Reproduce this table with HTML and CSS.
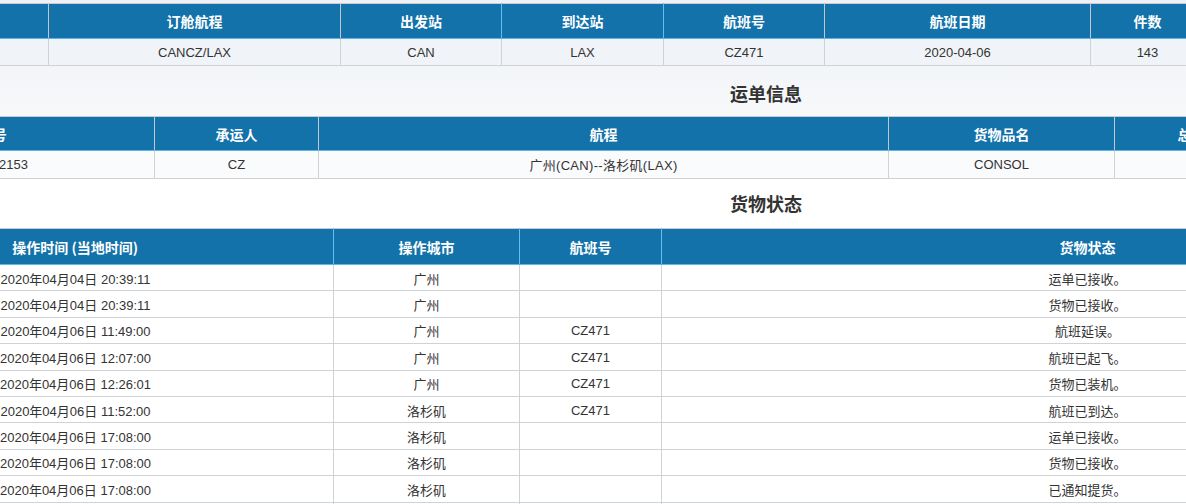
FILE: index.html
```html
<!DOCTYPE html>
<html lang="zh-CN">
<head>
<meta charset="utf-8">
<title>货物追踪</title>
<link rel="stylesheet" href="styles.css">
</head>
<body>
<div class="page">
  <div class="top-band"></div>
  <table class="grid grid-booking">
    <colgroup>
      <col class="b1"><col class="b2"><col class="b3"><col class="b4"><col class="b5"><col class="b6"><col class="b7"><col class="b8"><col class="b9">
    </colgroup>
    <thead>
      <tr>
        <th class="sep-gray">运单号</th>
        <th class="sep-gray">订舱航程</th>
        <th class="sep-blue">出发站</th>
        <th class="sep-blue">到达站</th>
        <th class="sep-gray">航班号</th>
        <th class="sep-gray">航班日期</th>
        <th class="sep-gray">件数</th>
        <th class="sep-gray">重量</th>
        <th>体积</th>
      </tr>
    </thead>
    <tbody>
      <tr>
        <td>784-66002153</td>
        <td>CANCZ/LAX</td>
        <td>CAN</td>
        <td>LAX</td>
        <td>CZ471</td>
        <td>2020-04-06</td>
        <td>143</td>
        <td></td>
        <td></td>
      </tr>
    </tbody>
  </table>

  <h2 class="section-title title-waybill">运单信息</h2>

  <table class="grid grid-waybill">
    <colgroup>
      <col class="w1"><col class="w2"><col class="w3"><col class="w4"><col class="w5"><col class="w6"><col class="w7">
    </colgroup>
    <thead>
      <tr>
        <th class="sep-gray">运单号</th>
        <th class="sep-gray">承运人</th>
        <th class="sep-gray">航程</th>
        <th class="sep-gray">货物品名</th>
        <th class="sep-gray">总件数</th>
        <th class="sep-gray">总重量</th>
        <th>总体积</th>
      </tr>
    </thead>
    <tbody>
      <tr>
        <td>784-66002153</td>
        <td>CZ</td>
        <td class="route">广州(CAN)--洛杉矶(LAX)</td>
        <td>CONSOL</td>
        <td></td>
        <td></td>
        <td></td>
      </tr>
    </tbody>
  </table>

  <h2 class="section-title title-status">货物状态</h2>

  <table class="grid grid-status">
    <colgroup>
      <col class="s1"><col class="s2"><col class="s3"><col class="s4"><col class="s5">
    </colgroup>
    <thead>
      <tr>
        <th class="sep-blue">操作时间 (当地时间)</th>
        <th class="sep-blue">操作城市</th>
        <th class="sep-blue">航班号</th>
        <th class="sep-blue">货物状态</th>
        <th>件数</th>
      </tr>
    </thead>
    <tbody>
      <tr><td>2020年04月04日 20:39:11</td><td>广州</td><td></td><td>运单已接收。</td><td></td></tr>
      <tr><td>2020年04月04日 20:39:11</td><td>广州</td><td></td><td>货物已接收。</td><td></td></tr>
      <tr><td>2020年04月06日 11:49:00</td><td>广州</td><td>CZ471</td><td>航班延误。</td><td></td></tr>
      <tr><td>2020年04月06日 12:07:00</td><td>广州</td><td>CZ471</td><td>航班已起飞。</td><td></td></tr>
      <tr><td>2020年04月06日 12:26:01</td><td>广州</td><td>CZ471</td><td>货物已装机。</td><td></td></tr>
      <tr><td>2020年04月06日 11:52:00</td><td>洛杉矶</td><td>CZ471</td><td>航班已到达。</td><td></td></tr>
      <tr><td>2020年04月06日 17:08:00</td><td>洛杉矶</td><td></td><td>运单已接收。</td><td></td></tr>
      <tr><td>2020年04月06日 17:08:00</td><td>洛杉矶</td><td></td><td>货物已接收。</td><td></td></tr>
      <tr><td>2020年04月06日 17:08:00</td><td>洛杉矶</td><td></td><td>已通知提货。</td><td></td></tr>
      <tr><td>2020年04月06日 17:08:00</td><td>洛杉矶</td><td></td><td>货物已提取。</td><td></td></tr>
    </tbody>
  </table>
</div>
</body>
</html>
```

FILE: styles.css
```css
html, body {
  margin: 0;
  padding: 0;
  background: #ffffff;
  overflow: hidden;
}

body {
  font-family: "Liberation Sans", "Noto Sans CJK SC", sans-serif;
  font-size: 13px;
  color: #333333;
}

.page {
  width: 1898px;
  margin-left: -183px;
  background: linear-gradient(180deg, #eef1f5 0px, #f6f8fa 110px, #ffffff 180px, #ffffff 100%);
}

.top-band {
  height: 3px;
}

.grid {
  width: 1898px;
  border-collapse: collapse;
  table-layout: fixed;
}

.grid th {
  background: #1272a9;
  color: #ffffff;
  font-family: "Noto Sans CJK SC", "Liberation Sans", sans-serif;
  font-weight: bold;
  font-size: 14px;
  text-align: center;
  padding: 0;
  border-top: 1px solid #c9ccd0;
  border-bottom: 1px solid #5cb6ea;
  white-space: nowrap;
  overflow: hidden;
}

.grid th.sep-gray {
  border-right: 1px solid #c2c6cc;
}

.grid th.sep-blue {
  border-right: 1px solid #62bdf0;
}

.grid td {
  text-align: center;
  padding: 0;
  border: 1px solid #cfd2d6;
  border-top: none;
  white-space: nowrap;
  overflow: hidden;
}

/* booking table */
.grid-booking th {
  height: 34px;
}

.grid-booking td {
  height: 26px;
  background: #f0f3f7;
}

.b1 { width: 231px; }
.b2 { width: 292px; }
.b3 { width: 161px; }
.b4 { width: 162px; }
.b5 { width: 161px; }
.b6 { width: 266px; }
.b7 { width: 114px; }
.b8 { width: 255px; }
.b9 { width: 256px; }

/* section titles */
.section-title {
  margin: 0;
  text-align: center;
  font-family: "Noto Sans CJK SC", "Liberation Sans", sans-serif;
  font-size: 18px;
  font-weight: bold;
  color: #333333;
  line-height: 28px;
}

.title-waybill {
  padding: 13px 0 9px;
}

.title-status {
  padding: 10px 0 11px;
}

/* waybill table */
.grid-waybill th {
  height: 33px;
}

.grid-waybill td {
  height: 27px;
  background: #fafbfd;
}

.grid-waybill td.route {
  letter-spacing: 0.3px;
}

.w1 { width: 337px; }
.w2 { width: 164px; }
.w3 { width: 570px; }
.w4 { width: 226px; }
.w5 { width: 168px; }
.w6 { width: 216px; }
.w7 { width: 217px; }

/* status table */
.grid-status th {
  height: 35px;
}

.grid-status td {
  height: 24.4px;
  padding-top: 1px;
  background: #ffffff;
}

.s1 { width: 516px; }
.s2 { width: 186px; }
.s3 { width: 142px; }
.s4 { width: 852px; }
.s5 { width: 202px; }
```
